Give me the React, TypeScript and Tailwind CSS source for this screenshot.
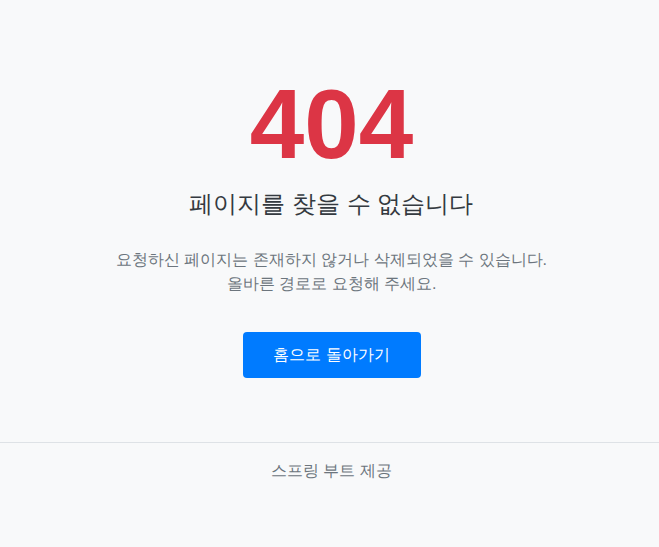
import React from "react";

export default function App() {
  const ko = { fontFamily: '"Liberation Sans", sans-serif' };
  return (
    <div className="min-h-[547px] bg-[#f8f9fa] flex flex-col" style={ko}>
      <div className="flex flex-col items-center pt-[66px] pl-[4px]">
        <h1
          className="text-[98px] leading-[1.2] font-bold text-[#dc3545]"
          style={{ fontFamily: '"Liberation Sans", Arial, sans-serif' }}
        >
          404
        </h1>
        <h2 className="mt-[6px] text-[24px] leading-[1.2] text-[#343a40]">
          페이지를 찾을 수 없습니다
        </h2>
        <p className="mt-[30px] text-[16px] leading-[24px] text-[#6c757d] text-center">
          요청하신 페이지는 존재하지 않거나 삭제되었을 수 있습니다.
          <br />
          올바른 경로로 요청해 주세요.
        </p>
        <button className="mt-[36px] w-[178px] h-[46px] rounded-[4px] bg-[#007bff] text-white text-[16px]">
          홈으로 돌아가기
        </button>
      </div>
      <div className="mt-[64px] border-t border-[#dee2e6] pt-[16px] pl-[4px] text-center text-[16px] leading-[24px] text-[#6c757d]">
        스프링 부트 제공
      </div>
    </div>
  );
}
